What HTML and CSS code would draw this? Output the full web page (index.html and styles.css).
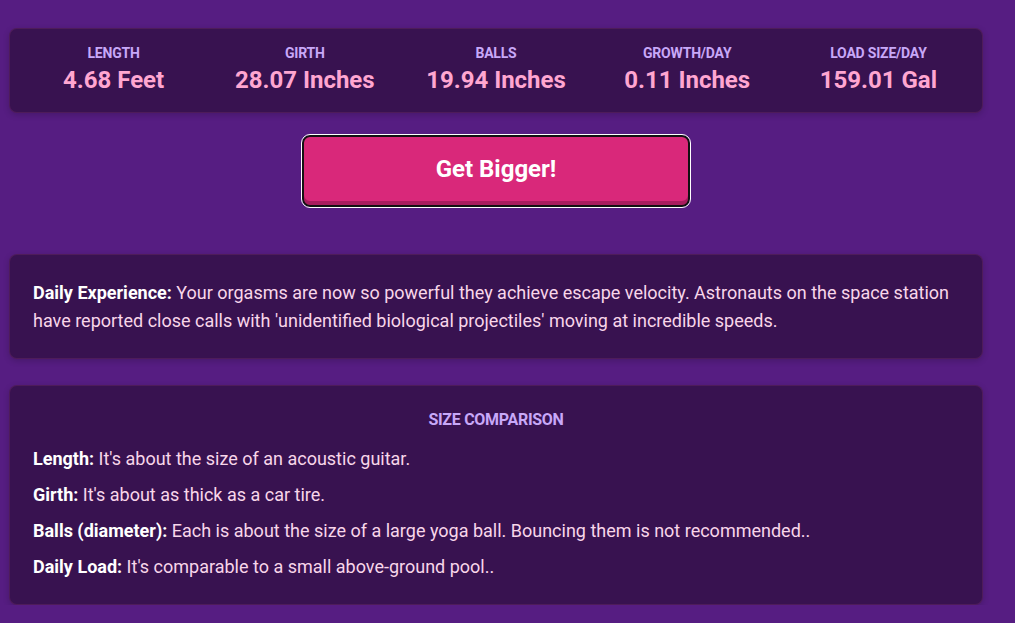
FILE: index.html
```html
<!DOCTYPE html>
<html lang="en">
<head>
<meta charset="utf-8">
<title>Get Bigger</title>
<link rel="stylesheet" href="styles.css">
</head>
<body>
<main class="page">
  <section class="card stats">
    <div class="stat"><div class="stat-label">Length</div><div class="stat-value">4.68 Feet</div></div>
    <div class="stat"><div class="stat-label">Girth</div><div class="stat-value">28.07 Inches</div></div>
    <div class="stat"><div class="stat-label">Balls</div><div class="stat-value">19.94 Inches</div></div>
    <div class="stat"><div class="stat-label">Growth/Day</div><div class="stat-value">0.11 Inches</div></div>
    <div class="stat"><div class="stat-label">Load Size/Day</div><div class="stat-value">159.01 Gal</div></div>
  </section>

  <div class="action">
    <button class="grow-btn" type="button">Get Bigger!</button>
  </div>

  <section class="card experience">
    <p><strong>Daily Experience:</strong> Your orgasms are now so powerful they achieve escape velocity. Astronauts on the space station have reported close calls with 'unidentified biological projectiles' moving at incredible speeds.</p>
  </section>

  <section class="card comparison">
    <h2 class="comparison-title">Size Comparison</h2>
    <p><strong>Length:</strong> It's about the size of an acoustic guitar.</p>
    <p><strong>Girth:</strong> It's about as thick as a car tire.</p>
    <p><strong>Balls (diameter):</strong> Each is about the size of a large yoga ball. Bouncing them is not recommended..</p>
    <p><strong>Daily Load:</strong> It's comparable to a small above-ground pool..</p>
  </section>
</main>
</body>
</html>
```

FILE: styles.css
```css
* { box-sizing: border-box; }

html, body {
  margin: 0;
  padding: 0;
  background: #561d82;
  font-family: Roboto, "Liberation Sans", Arial, sans-serif;
  color: #f8d6ea;
}

.page {
  width: 974px;
  margin-left: 9px;
  padding-top: 28px;
  display: flex;
  flex-direction: column;
}

.card {
  background: #381250;
  border: 1px solid rgba(120, 50, 110, 0.35);
  border-radius: 8px;
  box-shadow: 0 2px 6px rgba(0, 0, 0, 0.18);
}

.stats {
  display: grid;
  grid-template-columns: repeat(5, 1fr);
  padding: 15px 8px 0;
  height: 85px;
}

.stat {
  display: flex;
  flex-direction: column;
  align-items: center;
}

.stat-label {
  font-size: 14px;
  font-weight: 700;
  text-transform: uppercase;
  color: #c8a8f8;
  line-height: 18px;
  letter-spacing: -0.2px;
}

.stat-value {
  font-size: 24px;
  font-weight: 700;
  color: #ffa6d1;
  line-height: 30px;
  margin-top: 3px;
}

.action {
  display: flex;
  justify-content: center;
  padding: 22px 0 47px;
}

.grow-btn {
  width: 388px;
  height: 72px;
  background: #d9287a;
  color: #ffffff;
  font-family: Roboto, "Liberation Sans", Arial, sans-serif;
  font-size: 24px;
  font-weight: 700;
  border: 2px solid #111111;
  border-radius: 8px;
  outline: 1px solid #ffffff;
  box-shadow: inset 0 -4px 0 #a81c5e;
  cursor: pointer;
  padding: 0 0 4px;
}

.experience {
  padding: 24px 23px 23px;
  margin-bottom: 26px;
}

.experience p {
  margin: 0;
  font-size: 18px;
  line-height: 28px;
}

.comparison {
  padding: 23px 23px 14px;
}

.comparison-title {
  margin: 0 0 15px;
  text-align: center;
  font-size: 16px;
  font-weight: 700;
  text-transform: uppercase;
  color: #c8a8f8;
  line-height: 22px;
  letter-spacing: -0.3px;
}

.comparison p {
  margin: 0 0 10px;
  font-size: 18px;
  line-height: 26px;
}

strong {
  color: #ffffff;
  font-weight: 700;
}
```
